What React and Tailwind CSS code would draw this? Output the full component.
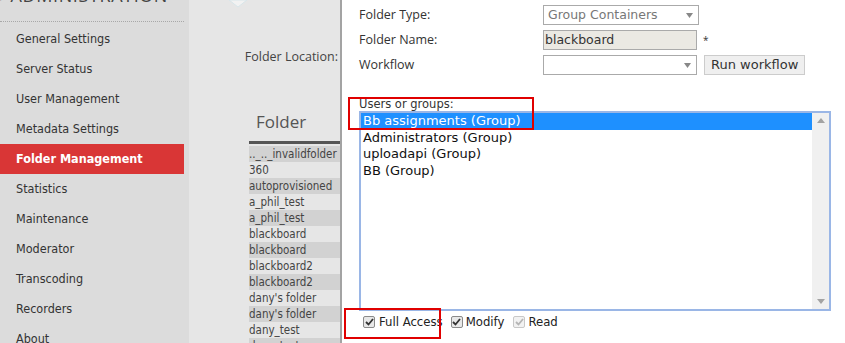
import React from "react";

const menu = [
  "General Settings",
  "Server Status",
  "User Management",
  "Metadata Settings",
  "Folder Management",
  "Statistics",
  "Maintenance",
  "Moderator",
  "Transcoding",
  "Recorders",
  "About",
];

const folders = [
  ".._.._invalidfolder",
  "360",
  "autoprovisioned",
  "a_phil_test",
  "a_phil_test",
  "blackboard",
  "blackboard",
  "blackboard2",
  "blackboard2",
  "dany's folder",
  "dany's folder",
  "dany_test",
  "dany_test",
];

const groups = ["Bb assignments (Group)", "Administrators (Group)", "uploadapi (Group)", "BB (Group)"];

const cond = "font-['DejaVu_Sans_Condensed','DejaVu_Sans',sans-serif] font-stretch-condensed";

export default function App() {
  return (
    <div className="flex h-[343px] w-[845px] overflow-hidden bg-white font-['Open_Sans',sans-serif] text-[13px] text-[#333]">
      <Sidebar />
      <div className="relative flex w-[153px] shrink-0 flex-col border-r-2 border-[#a3a3a3] bg-[#e6e6e6]">
        <svg className="absolute left-[40px] top-0" width="18" height="8" viewBox="0 0 18 8">
          <path d="M0 0 L9 7 L18 0 Z" fill="#f2f2f2" stroke="#d8e6ea" />
        </svg>
        <div className="mt-[48px] pr-[2px] text-right text-[12.5px] text-[#444]">Folder Location:</div>
        <div className="mt-[44px] pl-[67px] text-[17px] leading-[22px] text-[#555]">Folder</div>
        <div className={`ml-[60px] mt-[8px] border-t-[3px] border-[#555] pt-[2px] text-[11.5px] leading-[16px] text-[#444] ${cond}`}>
          {folders.map((f, i) => (
            <div key={i} className={`overflow-hidden whitespace-nowrap ${i % 2 === 0 ? "bg-[#d2d2d2]" : "bg-[#e6e6e6]"}`}>
              {f}
            </div>
          ))}
        </div>
      </div>
      <Panel />
    </div>
  );
}

function Sidebar() {
  return (
    <div className="flex w-[189px] shrink-0 flex-col bg-[#dcdcdc] pr-[5px]">
      <div className="relative h-[22px] shrink-0 overflow-hidden border-b border-dotted border-[#a8a8a8]">
        <div className="absolute bottom-[15px] left-[-4px] flex items-center gap-[5px] whitespace-nowrap text-[18px] leading-[22px] tracking-[0.6px] text-[#444]">
          <span className="text-[12px]">◆</span>
          <span>ADMINISTRATION</span>
        </div>
      </div>
      <div className="mt-[2px] flex shrink-0 flex-col">
        {menu.map((m) => {
          const active = m === "Folder Management";
          return (
            <div
              key={m}
              className={`h-[30px] shrink-0 pl-[16px] text-[12.5px] leading-[30px] ${cond} ${active ? "bg-[#d93636] font-bold text-white" : "text-[#333]"}`}
            >
              {m}
            </div>
          );
        })}
      </div>
    </div>
  );
}

function Panel() {
  return (
    <div className="relative flex-1 bg-white pl-[17px]">
      <div className="mt-[5px] flex flex-col gap-[5px]">
        <Row label="Folder Type:">
          <Select value="Group Containers" />
        </Row>
        <Row label="Folder Name:">
          <div className="flex h-[20px] w-[154px] items-center border border-[#aaa] bg-[#ebe9e3] pl-[1px] font-['DejaVu_Sans',sans-serif] text-[12.5px] text-[#333]">
            blackboard
          </div>
          <span className="ml-[6px] text-[10px] text-[#333]">*</span>
        </Row>
        <Row label="Workflow">
          <Select value="" w="w-[154px]" />
          <button className="ml-[7px] h-[20px] border border-[#ccc] bg-[#efefef] px-[6px] font-['DejaVu_Sans',sans-serif] text-[13px] leading-[18px] text-[#333]">
            Run workflow
          </button>
        </Row>
      </div>

      <div className="mt-[22px] font-['DejaVu_Sans',sans-serif] text-[11.5px] leading-[14px] text-[#333]">Users or groups:</div>
      <div className="flex h-[200px] w-[472px] border-2 border-[#9ab6e6] bg-white font-['DejaVu_Sans',sans-serif] text-[13px] leading-[16.5px] text-[#111]">
        <div className="flex-1">
          {groups.map((g, i) => (
            <div key={g} className={`pl-[2px] ${i === 0 ? "bg-[#1e90ff] text-white" : ""}`}>
              {g}
            </div>
          ))}
        </div>
        <div className="flex w-[17px] flex-col items-center justify-between bg-[#f0f0f0] py-[5px]">
          <svg width="8" height="5" viewBox="0 0 8 5"><path d="M0 5 L4 0 L8 5 Z" fill="#a3a3a3" /></svg>
          <svg width="8" height="5" viewBox="0 0 8 5"><path d="M0 0 L4 5 L8 0 Z" fill="#a3a3a3" /></svg>
        </div>
      </div>

      <div className={`mt-[1px] flex items-center text-[13px] text-[#222] ${cond}`}>
        <Check className="ml-[4px]" />
        <span className="ml-[4px]">Full Access</span>
        <Check className="ml-[8px]" />
        <span className="ml-[3px]">Modify</span>
        <Check className="ml-[9px]" disabled />
        <span className="ml-[3px]">Read</span>
      </div>

      <div className="absolute left-[6px] top-[97px] h-[33px] w-[186px] border-2 border-[#e00000]" />
      <div className="absolute left-[2px] top-[308px] h-[31px] w-[97px] border-2 border-[#e00000]" />
    </div>
  );
}

function Row({ label, children }) {
  return (
    <div className="flex h-[20px] items-center">
      <div className="w-[184px] text-[12.5px] text-[#333]">{label}</div>
      {children}
    </div>
  );
}

function Select({ value, w = "w-[156px]" }) {
  return (
    <div className={`flex h-[20px] ${w} items-center justify-between border border-[#aaa] bg-white pl-[4px] pr-[5px] font-['DejaVu_Sans',sans-serif] text-[12.5px] text-[#777]`}>
      <span>{value}</span>
      <svg width="7" height="5" viewBox="0 0 7 5"><path d="M0 0 L3.5 5 L7 0 Z" fill="#888" /></svg>
    </div>
  );
}

function Check({ className = "", disabled = false }) {
  return (
    <div
      className={`flex h-[12px] w-[12px] items-center justify-center rounded-[2px] border ${disabled ? "border-[#c8c8c8] bg-[#f2f2f2]" : "border-[#8a8a8a] bg-[#e8e8e8]"} ${className}`}
    >
      <svg width="9" height="8" viewBox="0 0 9 8">
        <path d="M1 4 L3.5 6.5 L8 1" fill="none" stroke={disabled ? "#b5b5b5" : "#333"} strokeWidth="1.8" />
      </svg>
    </div>
  );
}
